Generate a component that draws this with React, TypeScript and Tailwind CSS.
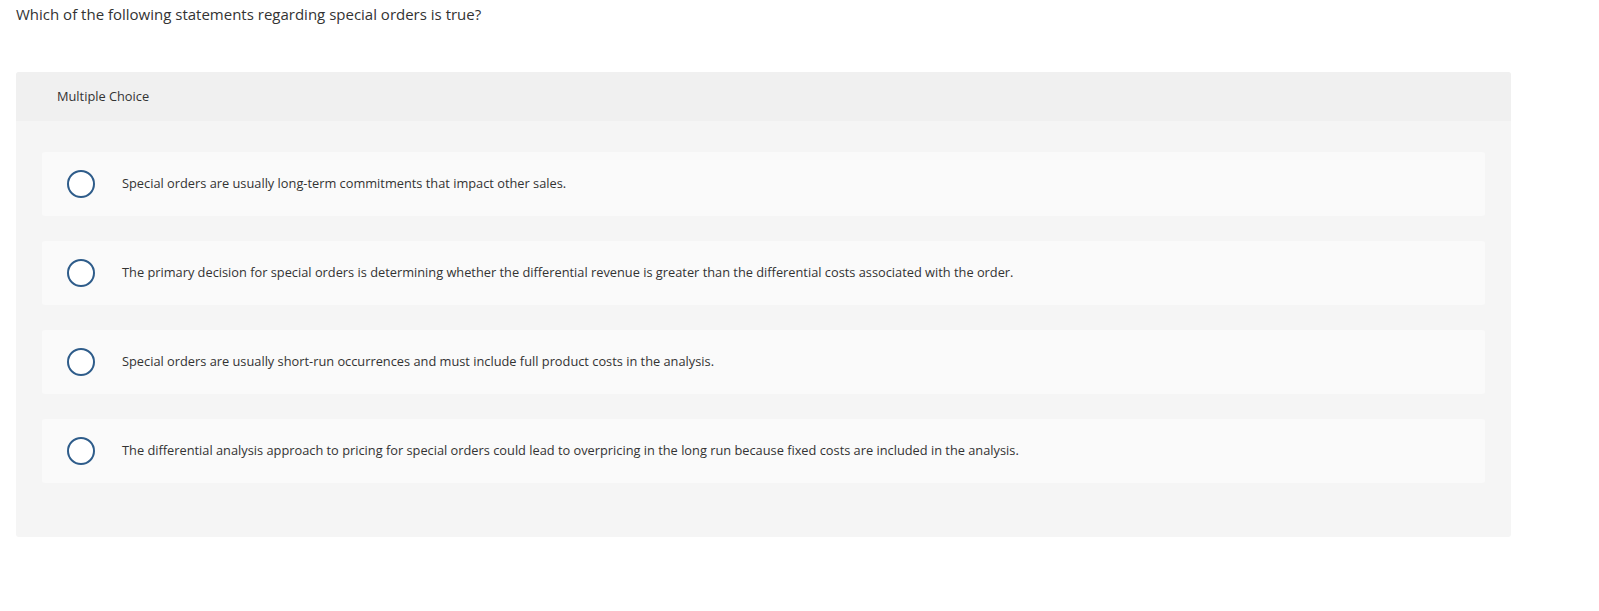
import React from "react";

const options = [
  "Special orders are usually long-term commitments that impact other sales.",
  "The primary decision for special orders is determining whether the differential revenue is greater than the differential costs associated with the order.",
  "Special orders are usually short-run occurrences and must include full product costs in the analysis.",
  "The differential analysis approach to pricing for special orders could lead to overpricing in the long run because fixed costs are included in the analysis.",
];

export default function App() {
  return (
    <div className="min-h-[611px] bg-white text-[#333333]" style={{ fontFamily: "'Open Sans', Lato, sans-serif" }}>
      <div className="px-4 pt-[4px]">
        <p className="text-[15px] leading-[20px] text-[#333]">Which of the following statements regarding special orders is true?</p>
      </div>
      <div className="ml-4 mt-[48px] w-[1495px] rounded-[3px] bg-[#f5f5f5]">
        <div className="flex h-[49px] items-center rounded-t-[3px] bg-[#f0f0f0] pl-[41px]">
          <span className="text-[12.8px] text-[#333]">Multiple Choice</span>
        </div>
        <div className="flex flex-col gap-[25px] px-[26px] pb-[54px] pt-[31px]">
          {options.map((o, i) => (
            <div key={i} className="flex h-[64px] items-center rounded-[3px] bg-[#fafafa] pl-[25px]">
              <span className="h-[28px] w-[28px] shrink-0 rounded-full border-2 border-[#2e5c8a] bg-white" />
              <span className="ml-[27px] text-[12.8px] text-[#333]">{o}</span>
            </div>
          ))}
        </div>
      </div>
    </div>
  );
}
